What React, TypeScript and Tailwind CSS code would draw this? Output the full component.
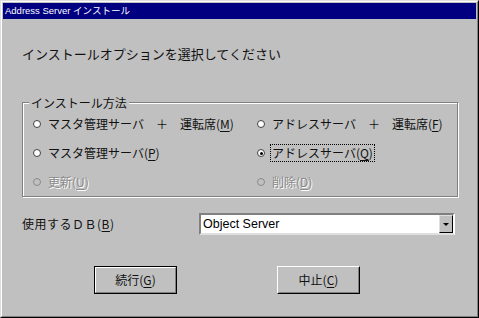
import React, { useState } from 'react';

const jp = "font-['Noto_Sans_CJK_JP','Noto_Sans',sans-serif]";

type Opt = { id: string; label: string; key: string; disabled?: boolean };

const Mnemonic: React.FC<{ label: string; k: string }> = ({ label, k }) => (
  <span>
    {label}(<span className="underline underline-offset-2">{k}</span>)
  </span>
);

const Radio: React.FC<{ opt: Opt; checked: boolean; focused: boolean; onPick: () => void }> = ({ opt, checked, focused, onPick }) => (
  <button
    type="button"
    disabled={opt.disabled}
    onClick={onPick}
    className={`flex h-[20px] items-center gap-[6px] text-left ${opt.disabled ? 'text-[#8a8a8a] [text-shadow:1px_1px_0_#ffffff]' : 'text-[#111111]'}`}
  >
    <span
      className={`flex h-[8px] w-[8px] shrink-0 items-center justify-center rounded-full border ${
        opt.disabled ? 'border-[#8a8a8a] bg-[#c0c0c0]' : 'border-[#404040] bg-white'
      }`}
    >
      {checked && <span className="h-[3px] w-[3px] rounded-full bg-black" />}
    </span>
    <span className={`px-[1px] leading-[16px] ${focused ? 'outline outline-1 outline-dotted outline-black' : ''}`}>
      <Mnemonic label={opt.label} k={opt.key} />
    </span>
  </button>
);

const options: Opt[] = [
  { id: 'master-op', label: 'マスタ管理サーバ　＋　運転席', key: 'M' },
  { id: 'addr-op', label: 'アドレスサーバ　＋　運転席', key: 'F' },
  { id: 'master', label: 'マスタ管理サーバ', key: 'P' },
  { id: 'addr', label: 'アドレスサーバ', key: 'Q' },
  { id: 'update', label: '更新', key: 'U', disabled: true },
  { id: 'remove', label: '削除', key: 'D', disabled: true },
];

const App: React.FC = () => {
  const [mode, setMode] = useState('addr');

  return (
    <div className={`h-[318px] w-[479px] border border-t-[#dfdfdf] border-l-[#dfdfdf] border-r-black border-b-black bg-[#c0c0c0] ${jp} text-[12px]`}>
      <div className="h-full border border-t-white border-l-white border-r-[#808080] border-b-[#808080] p-[1px]">
        {/* title bar */}
        <div className="flex h-[16px] items-center bg-[#000080] px-[2px] font-['Liberation_Sans','Noto_Sans_CJK_JP',sans-serif] text-[9.5px] text-white">
          Address Server インストール
        </div>

        <div className="mt-[25px] flex h-[20px] items-center pl-[19px] text-[13px] text-[#111111]">
          インストールオプションを選択してください
        </div>

        {/* group box */}
        <div className="relative ml-[19px] mt-[38px] h-[95px] w-[436px] border border-[#808080] [box-shadow:1px_1px_0_#ffffff,inset_1px_1px_0_#ffffff]">
          <div className="absolute -top-[8px] left-[6px] bg-[#c0c0c0] px-[2px] leading-[16px] text-[#111111]">
            インストール方法
          </div>
          <div className="grid grid-cols-[224px_1fr] gap-y-[9px] pl-[10px] pt-[11px]">
            {options.map(o => (
              <Radio
                key={o.id}
                opt={o}
                checked={mode === o.id}
                focused={mode === o.id}
                onPick={() => setMode(o.id)}
              />
            ))}
          </div>
        </div>

        {/* DB row */}
        <div className="mt-[16px] flex h-[22px] items-center pl-[19px]">
          <span className="w-[177px] tracking-[0.5px] text-[#111111]">
            <Mnemonic label="使用するＤＢ" k="B" />
          </span>
          <div className="flex h-[22px] w-[256px] border-2 border-t-[#808080] border-l-[#808080] border-r-white border-b-[#dfdfdf] bg-white">
            <div className="flex flex-1 items-center pl-[2px] font-['Liberation_Sans',sans-serif] text-[12.5px] text-black">
              Object Server
            </div>
            <div className="flex w-[14px] items-center justify-center border border-t-[#dfdfdf] border-l-[#dfdfdf] border-r-black border-b-black bg-[#c0c0c0]">
              <span className="h-0 w-0 border-x-[3px] border-t-[3px] border-x-transparent border-t-black" />
            </div>
          </div>
        </div>

        {/* buttons */}
        <div className="mt-[31px] flex pl-[91px]">
          <button className="flex h-[28px] w-[83px] items-center justify-center border border-black text-[#111111]">
            <span className="flex h-full w-full items-center justify-center border border-t-white border-l-white border-r-[#808080] border-b-[#808080]">
              <Mnemonic label="続行" k="G" />
            </span>
          </button>
          <button className="ml-[100px] flex h-[28px] w-[83px] items-center justify-center border border-t-white border-l-white border-r-black border-b-black text-[#111111]">
            <span className="flex h-full w-full items-center justify-center border border-transparent border-r-[#808080] border-b-[#808080]">
              <Mnemonic label="中止" k="C" />
            </span>
          </button>
        </div>
      </div>
    </div>
  );
};

export default App;
